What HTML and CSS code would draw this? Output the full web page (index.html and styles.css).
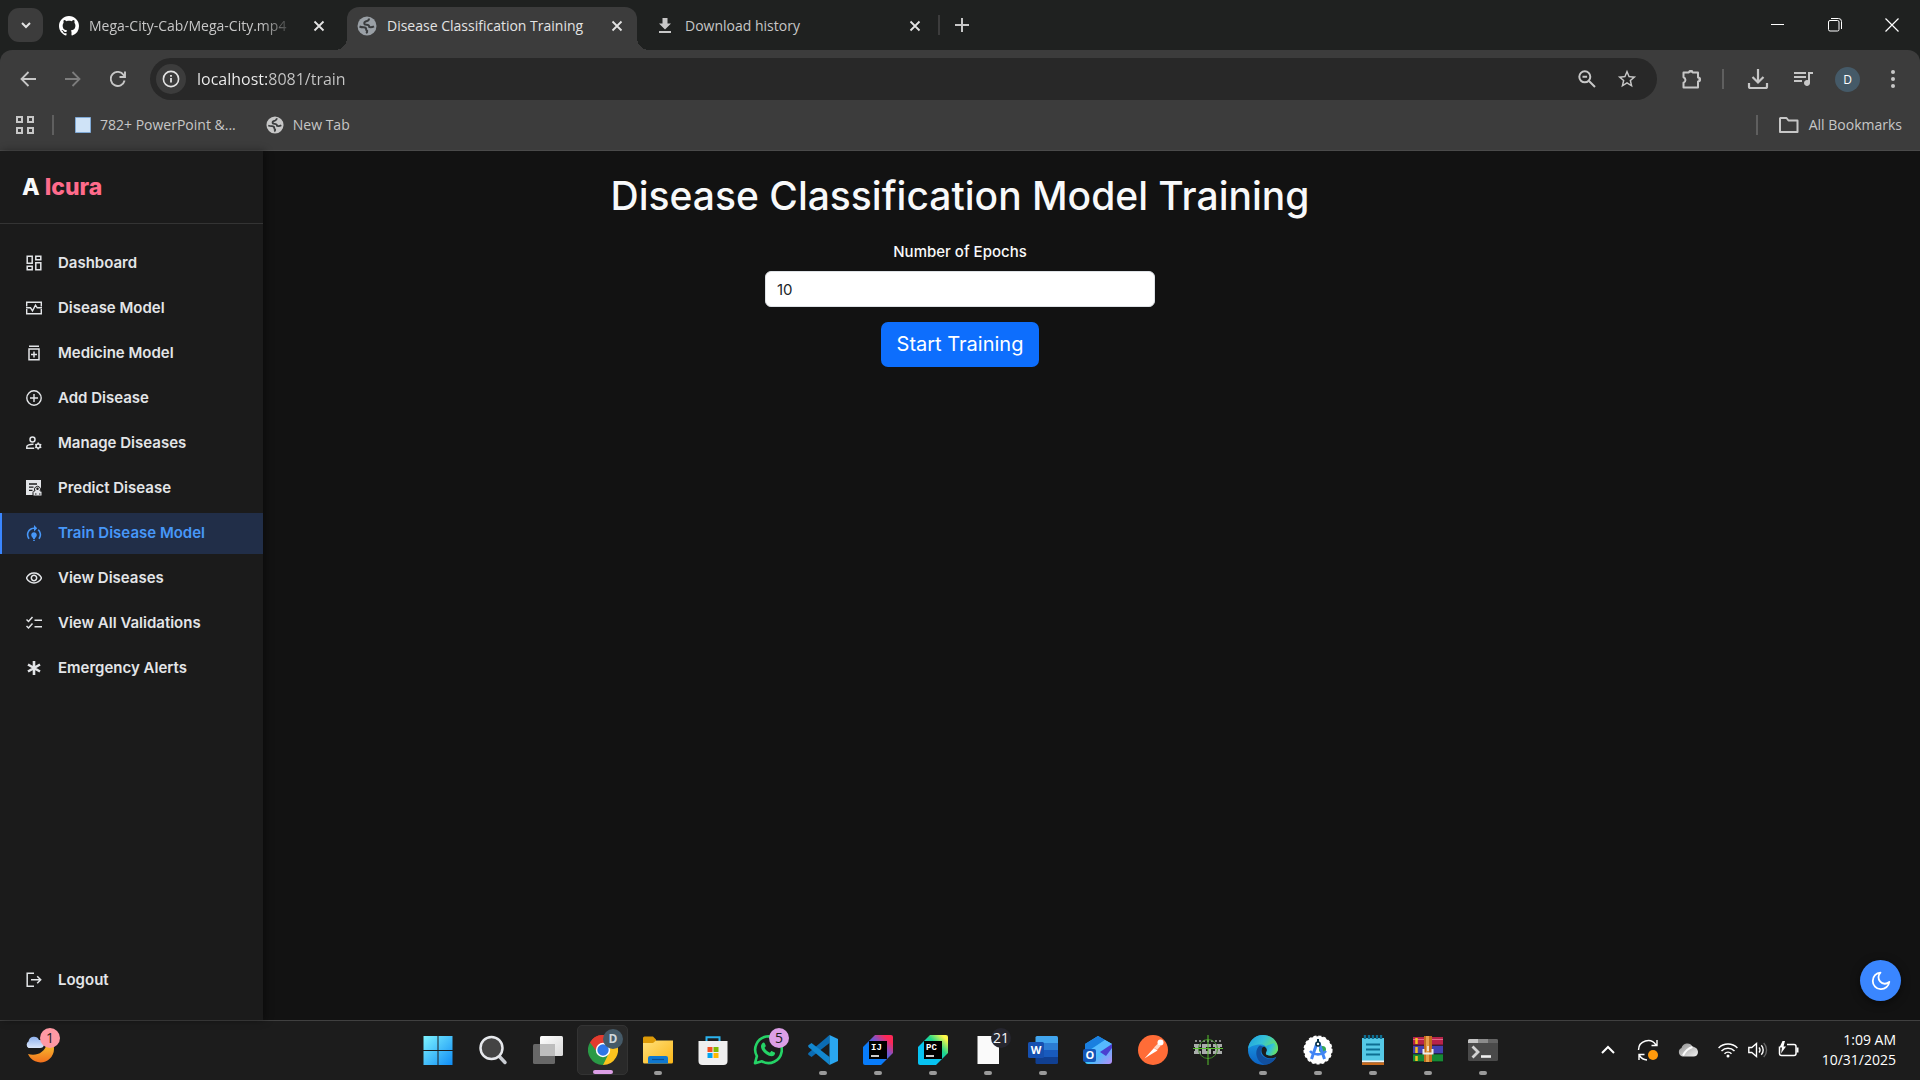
FILE: index.html
```html
<!DOCTYPE html>
<html lang="en">
<head>
<meta charset="utf-8">
<meta name="viewport" content="width=device-width, initial-scale=1">
<title>Disease Classification Training</title>
<link rel="stylesheet" href="styles.css">
</head>
<body>
<svg class="defs" aria-hidden="true">
  <defs>
    <symbol id="i-close" viewBox="0 0 16 16"><path d="M3.500 3.500l9 9M12.500 3.500l-9 9" fill="none" stroke="currentColor" stroke-width="1.800"/></symbol>
    <symbol id="i-globe" viewBox="0 0 20 20"><circle cx="10" cy="10" r="9.500" fill="currentColor"/><path d="M12 2.500c0 1.600-.8 2.300-2 2.600-1.800.4-2.700 1-2.700 2.200 0 1 .8 1.500 2.200 1.500 2.200 0 2.700 1 2.900 2.300 1.600.3 3.300 0 4.600-.8M2.500 10.500c1.300.6 2.500.8 4 .8 1.700 0 2.700.8 2.700 2.200 0 .8.300 1.200 1 1.500.2.900-.2 1.500-1 2.200" fill="none" stroke="#3a3c3e" stroke-width="2"/></symbol>
    <linearGradient id="g-win" x1="0" y1="0" x2="1" y2="1"><stop offset="0" stop-color="#7df3ff"/><stop offset="1" stop-color="#0f8cf5"/></linearGradient>
    <linearGradient id="g-moon" x1="0" y1="0" x2="0" y2="1"><stop offset="0" stop-color="#f7c531"/><stop offset="1" stop-color="#f2701d"/></linearGradient>
    <linearGradient id="g-cloud" x1="0" y1="0" x2="0" y2="1"><stop offset="0" stop-color="#8fb2ee"/><stop offset="1" stop-color="#dbe7fb"/></linearGradient>
    <linearGradient id="g-view" x1="0" y1="0" x2="1" y2="1"><stop offset="0" stop-color="#fff"/><stop offset="1" stop-color="#d8d8d8"/></linearGradient>
    <linearGradient id="g-folder" x1="0" y1="0" x2="1" y2="1"><stop offset="0" stop-color="#ffe07a"/><stop offset="1" stop-color="#fbb617"/></linearGradient>
    <linearGradient id="g-ij" x1="0" y1="1" x2="1" y2="0"><stop offset=".4" stop-color="#087cfa"/><stop offset=".65" stop-color="#8a4fc0"/><stop offset=".85" stop-color="#fe2857"/></linearGradient>
    <linearGradient id="g-pc" x1="0" y1="1" x2="1" y2="0"><stop offset=".4" stop-color="#07c3f2"/><stop offset=".65" stop-color="#21d789"/><stop offset=".9" stop-color="#fcf84a"/></linearGradient>
    <linearGradient id="g-out" x1="0" y1="0" x2="1" y2="1"><stop offset="0" stop-color="#2a8cf0"/><stop offset=".5" stop-color="#35c6fb"/><stop offset="1" stop-color="#b98cf7"/></linearGradient>
    <linearGradient id="g-edge" x1="0" y1="0" x2="1" y2=".5"><stop offset="0" stop-color="#1b9de0"/><stop offset=".5" stop-color="#35c1d8"/><stop offset="1" stop-color="#6be35a"/></linearGradient>
    <linearGradient id="g-edge2" x1="0" y1="0" x2="0" y2="1"><stop offset="0" stop-color="#1ea3e8"/><stop offset="1" stop-color="#0c62c4"/></linearGradient>
    <linearGradient id="g-drive" x1="0" y1="0" x2="1" y2="1"><stop offset="0" stop-color="#8e8e8e"/><stop offset="1" stop-color="#f2f2f2"/></linearGradient>
  </defs>
</svg>

<header class="browser">
  <div class="tabstrip">
    <button class="tab-search" type="button" aria-label="Search tabs"><svg viewBox="0 0 16 16" width="16" height="16"><path d="M4 6l4 4 4-4" fill="none" stroke="currentColor" stroke-width="2"/></svg></button>
    <div class="tab">
      <svg class="tab-icon bright" viewBox="0 0 16 16"><path fill="currentColor" d="M8 0C3.580 0 0 3.580 0 8c0 3.540 2.290 6.530 5.470 7.590.4.070.55-.17.55-.38 0-.19-.01-.82-.01-1.490-2.010.37-2.530-.49-2.690-.94-.09-.23-.48-.94-.82-1.130-.28-.15-.68-.52-.01-.53.63-.01 1.080.58 1.230.82.72 1.210 1.870.87 2.330.66.070-.52.28-.87.51-1.070-1.780-.2-3.640-.89-3.640-3.950 0-.87.31-1.590.82-2.150-.08-.2-.36-1.020.080-2.120 0 0 .67-.21 2.200.82.64-.18 1.320-.27 2-.27s1.360.09 2 .27c1.530-1.040 2.200-.82 2.200-.82.44 1.100.16 1.920.080 2.120.51.56.82 1.270.82 2.150 0 3.070-1.870 3.750-3.650 3.950.29.25.54.73.54 1.480 0 1.070-.01 1.930-.01 2.200 0 .21.15.46.55.38A8.010 8.010 0 0 0 16 8c0-4.420-3.580-8-8-8z"/></svg>
      <span class="tab-title faded">Mega-City-Cab/Mega-City.mp4</span>
      <button class="tab-close" type="button" aria-label="Close tab"><svg width="16" height="16"><use href="#i-close"/></svg></button>
    </div>
    <div class="tab active">
      <svg class="tab-icon dim"><use href="#i-globe"/></svg>
      <span class="tab-title">Disease Classification Training</span>
      <button class="tab-close" type="button" aria-label="Close tab"><svg width="16" height="16"><use href="#i-close"/></svg></button>
    </div>
    <div class="tab">
      <svg class="tab-icon" viewBox="0 0 20 20"><path fill="currentColor" d="M7.500 2h5v5.500h3.500L10 13.500 4 7.500h3.500zM4 15h12v2H4z"/></svg>
      <span class="tab-title">Download history</span>
      <button class="tab-close" type="button" aria-label="Close tab"><svg width="16" height="16"><use href="#i-close"/></svg></button>
    </div>
    <span class="tab-sep"></span>
    <button class="new-tab" type="button" aria-label="New tab"><svg width="14" height="14" viewBox="0 0 14 14"><path d="M7 0v14M0 7h14" stroke="currentColor" stroke-width="2"/></svg></button>
    <div class="window-controls">
      <button type="button" aria-label="Minimize"><svg width="14" height="14" viewBox="0 0 14 14"><path d="M0 6.500h13" stroke="currentColor"/></svg></button>
      <button type="button" aria-label="Restore"><svg width="14" height="14" viewBox="0 0 14 14" fill="none" stroke="currentColor"><rect x=".5" y="2.500" width="10.500" height="10.500" rx="1.500"/><path d="M3 .5h7.500a3 3 0 0 1 3 3V11"/></svg></button>
      <button type="button" aria-label="Close"><svg width="14" height="14" viewBox="0 0 14 14"><path d="M.5.5l13 13M13.500.5l-13 13" stroke="currentColor" stroke-width="1.200"/></svg></button>
    </div>
  </div>

  <div class="toolbar">
    <button class="tool" type="button" aria-label="Back"><svg width="16" height="16" viewBox="0 0 16 16" fill="none" stroke="currentColor" stroke-width="1.800"><path d="M16 8H2M8.500 1L1.500 8l7 7"/></svg></button>
    <button class="tool off" type="button" aria-label="Forward"><svg width="16" height="16" viewBox="0 0 16 16" fill="none" stroke="currentColor" stroke-width="1.800"><path d="M0 8h14M7.500 1l7 7-7 7"/></svg></button>
    <button class="tool" type="button" aria-label="Reload"><svg width="16" height="16" viewBox="0 0 16 16" fill="none" stroke="currentColor" stroke-width="1.900"><path d="M14.600 9.500A7 7 0 1 1 13.600 4L15 5.600M15 .5V6H9.500"/></svg></button>
    <div class="omnibox">
      <button class="site-info" type="button" aria-label="View site information"><svg width="18" height="18" viewBox="0 0 18 18"><circle cx="9" cy="9" r="7.600" fill="none" stroke="currentColor" stroke-width="1.600"/><path d="M9 8v4.500M9 5v1.800" stroke="currentColor" stroke-width="1.800"/></svg></button>
      <input class="url" type="text" aria-label="Address" value="localhost:8081/train">
      <button class="omni-btn" type="button" aria-label="Zoom"><svg width="18" height="18" viewBox="0 0 18 18" fill="none" stroke="currentColor" stroke-width="2"><circle cx="6.800" cy="6.800" r="5.500"/><path d="M11 11l6 6M4.500 6.800h4.600"/></svg></button>
      <button class="omni-btn" type="button" aria-label="Bookmark this tab"><svg width="22" height="22" viewBox="0 0 24 24"><path fill="currentColor" d="M22 9.240l-7.190-.62L12 2 9.190 8.630 2 9.240l5.460 4.730L5.820 21 12 17.270 18.180 21l-1.630-7.030L22 9.240zM12 15.400l-3.760 2.270 1-4.280-3.320-2.880 4.380-.38L12 6.100l1.710 4.040 4.380.38-3.320 2.880 1 4.280L12 15.400z"/></svg></button>
    </div>
    <button class="tool" type="button" aria-label="Extensions"><svg width="22" height="22" viewBox="0 0 22 22"><path d="M2.500 4.500h5.300a2 2 0 0 1 3.900 0h5.300v5a2 2 0 0 1 0 4v6h-14.500v-4.700a3 3 0 0 0 0-5.600z" fill="none" stroke="currentColor" stroke-width="2" stroke-linejoin="round"/><path d="M7.500 4.500a2.400 2.400 0 0 1 4.800 0zM17.500 9.200a2.400 2.400 0 0 1 0 4.800z" fill="currentColor"/></svg></button>
    <span class="sep"></span>
    <button class="tool" type="button" aria-label="Downloads"><svg width="22" height="22" viewBox="0 0 22 22" fill="none" stroke="currentColor" stroke-width="2.200"><path d="M11 1v13M5.500 9l5.500 5.500L16.500 9M2 15v3.500a1.500 1.500 0 0 0 1.500 1.500h15a1.500 1.500 0 0 0 1.500-1.500V15"/></svg></button>
    <button class="tool" type="button" aria-label="Media controls"><svg width="24" height="24" viewBox="0 0 24 24"><path fill="currentColor" d="M15 5H3v2h12V5zm0 4H3v2h12V9zM3 15h8v-2H3v2zM17 5v8.180c-.31-.11-.65-.18-1-.18-1.660 0-3 1.340-3 3s1.340 3 3 3 3-1.340 3-3V7h3V5h-5z"/></svg></button>
    <button class="tool" type="button" aria-label="Profile"><span class="avatar">D</span></button>
    <button class="tool" type="button" aria-label="Menu"><svg width="6" height="20" viewBox="0 0 6 20" fill="currentColor"><circle cx="3" cy="3" r="2"/><circle cx="3" cy="10" r="2"/><circle cx="3" cy="17" r="2"/></svg></button>
  </div>

  <nav class="bookmarks" aria-label="Bookmarks">
    <button class="apps" type="button" aria-label="Tab groups"><svg width="18" height="18" viewBox="0 0 18 18" fill="none" stroke="currentColor" stroke-width="2"><path d="M1 1h5v5H1zM12 1h5v5h-5zM1 12h5v5H1zM12 12h5v5h-5z"/></svg></button>
    <span class="sep"></span>
    <a class="mark" href="#"><svg width="16" height="16" viewBox="0 0 16 16"><path d="M.5.5h15v15H.5z" fill="#cfe3f7" stroke="#7fa9d6"/></svg>782+ PowerPoint &amp;...</a>
    <a class="mark" href="#"><svg width="18" height="18"><use href="#i-globe"/></svg>New Tab</a>
    <span class="sep push"></span>
    <button class="all" type="button"><svg width="22" height="18" viewBox="0 0 22 18"><path d="M2.500 2h6l2 2.500h9v11.500h-17.500V2.500z" fill="none" stroke="currentColor" stroke-width="2" stroke-linejoin="round"/></svg>All Bookmarks</button>
  </nav>
</header>

<div class="app">
  <aside class="sidebar">
    <div class="brand">A <span>Icura</span></div>
    <nav class="menu" aria-label="Main">
      <a href="#"><svg viewBox="0 0 16 16" fill="none" stroke="currentColor" stroke-width="1.500"><path d="M1.200 1.200h5v7h-5zM9.800 1.200h5v3.600h-5zM1.200 11.200h5v3.600h-5zM9.800 7.800h5v7h-5z"/></svg>Dashboard</a>
      <a href="#"><svg viewBox="0 0 16 16" fill="none" stroke="currentColor" stroke-width="1.400"><path d="M.7 6.500V2.200h14.600v4.300M.7 9v4.800h14.600V9M0 7.800h4.500l2 3 3-5.600 1.700 2.600H16"/></svg>Disease Model</a>
      <a href="#"><svg viewBox="0 0 16 16" fill="none" stroke="currentColor" stroke-width="1.500"><path d="M3 1.300h10M3 4h10v10.800H3zM8 6.500v6M5 9.500h6" /></svg>Medicine Model</a>
      <a href="#"><svg viewBox="0 0 16 16" fill="none" stroke="currentColor" stroke-width="1.400"><circle cx="8" cy="8" r="7.200"/><path d="M8 4v8M4 8h8"/></svg>Add Disease</a>
      <a href="#"><svg viewBox="0 0 16 16" fill="none" stroke="currentColor" stroke-width="1.500"><circle cx="6.500" cy="4.500" r="2.500"/><path d="M8.200 13.300H.8v-1.500c0-1.600 3-2.700 6.700-2.500"/><circle cx="12.200" cy="11" r="2"/><path d="M12.200 7.500V9M12.200 13v1.500M9.200 9.300l1.300.7M14 12l1.300.7M9.200 12.700l1.300-.7M14 10l1.300-.7"/></svg>Manage Diseases</a>
      <a href="#"><svg viewBox="0 0 16 16"><path fill="currentColor" d="M0 0h15v15H0z"/><path d="M3 4h8M3 7.200h4.500M3 10.300h3.500" stroke="#1b1b1b" stroke-width="1.300"/><path d="M7 16v-3.500c0-1.300 1-1.500 2-1.500a3 3 0 1 1 5 0c1 0 2 .4 2 1.500V16z" fill="#e3e5e8" stroke="#1b1b1b" stroke-width="1"/><circle cx="11.500" cy="8.700" r="1.200" fill="#1b1b1b"/><path d="M9 14h1.500M13 14h1.500" stroke="#1b1b1b"/></svg>Predict Disease</a>
      <a class="current" href="#" aria-current="page"><svg viewBox="3 1 18 20"><path fill="currentColor" d="M15.500 13.500c0 2-2.500 3.500-2.500 5h-2c0-1.500-2.500-3-2.500-5 0-1.930 1.570-3.500 3.500-3.500s3.500 1.570 3.500 3.500zm-2.500 6h-2V21h2v-1.500zm6-6.500c0 1.680-.59 3.210-1.580 4.420l1.420 1.420C20.180 17.270 21 15.230 21 13c0-2.740-1.230-5.190-3.160-6.840l-1.420 1.420C17.990 8.860 19 10.820 19 13zM16 5l-4-4v3c-4.970 0-9 4.030-9 9 0 2.230.82 4.270 2.160 5.840l1.420-1.420C5.590 16.210 5 14.680 5 13c0-3.860 3.140-7 7-7v3l4-4z"/></svg>Train Disease Model</a>
      <a href="#"><svg viewBox="2 1 20 21"><path fill="currentColor" d="M12 6c3.790 0 7.170 2.130 8.820 5.500C19.170 14.870 15.790 17 12 17s-7.170-2.130-8.820-5.500C4.830 8.130 8.210 6 12 6m0-2C7 4 2.730 7.110 1 11.500 2.730 15.890 7 19 12 19s9.270-3.110 11-7.500C21.270 7.110 17 4 12 4zm0 5c1.380 0 2.500 1.120 2.500 2.500S13.380 14 12 14s-2.500-1.120-2.500-2.500S10.620 9 12 9m0-2c-2.480 0-4.500 2.020-4.500 4.500S9.520 16 12 16s4.500-2.020 4.500-4.500S14.480 7 12 7z"/></svg>View Diseases</a>
      <a href="#"><svg viewBox="0 0 16 16" fill="none" stroke="currentColor" stroke-width="1.500"><path d="M.5 4.500l2 2L6.500 2M.5 11l2 2 4-4.500M8.500 5.200H16M8.500 11.700H16"/></svg>View All Validations</a>
      <a href="#"><svg viewBox="0 0 16 16" fill="none" stroke="currentColor" stroke-width="2.600"><path d="M8 1v14M2 4.500l12 7M14 4.500l-12 7"/></svg>Emergency Alerts</a>
    </nav>
    <nav class="menu bottom" aria-label="Account">
      <a href="#"><svg viewBox="0 0 16 16" fill="none" stroke="currentColor" stroke-width="1.500"><path d="M8 1.300H1.200v13H8M5 7.800h9.500M11.200 4.300l3.500 3.500-3.500 3.500"/></svg>Logout</a>
    </nav>
  </aside>
  <main class="content">
    <h1>Disease Classification Model Training</h1>
    <form class="train">
      <label for="epochs">Number of Epochs</label>
      <input id="epochs" type="number" value="10">
      <button type="button">Start Training</button>
    </form>
  </main>
  <button class="theme" type="button" aria-label="Toggle theme"><svg width="20" height="20" viewBox="0 0 20 20"><path d="M9.500 1.600A8.300 8.300 0 1 0 18.300 11 6 6 0 0 1 9.500 1.600z" fill="none" stroke="currentColor" stroke-width="1.800" stroke-linejoin="round"/></svg></button>
</div>

<footer class="taskbar">
  <button class="weather" type="button" aria-label="Weather">
    <svg width="30" height="30" viewBox="0 0 30 30"><path d="M28 9A13 13 0 0 1 3 19c8 2.500 17-1 19-11z" fill="url(#g-moon)"/><path d="M3.500 13a3.800 3.800 0 0 1 0-6.500A5.500 5.500 0 0 1 14 5c3 0 5 2 5 4.500S17 13 15 13z" fill="url(#g-cloud)"/></svg>
    <span class="badge pink">1</span>
  </button>
  <div class="apps-row">
    <button class="task" type="button" aria-label="Start"><svg viewBox="0 0 30 30"><path fill="url(#g-win)" d="M.5 1h14v14H.5zM15.500 1h14v14h-14zM.5 16h14v14H.5zM15.500 16h14v14h-14z"/></svg></button>
    <button class="task" type="button" aria-label="Search"><svg viewBox="0 0 30 30"><path d="M20 20l7 7.500" stroke="#c9ccd2" stroke-width="3.500" stroke-linecap="round"/><circle cx="13.500" cy="13" r="11" fill="#444" stroke="#e6e8ec" stroke-width="2.500"/></svg></button>
    <button class="task" type="button" aria-label="Task view"><svg viewBox="0 0 30 30"><rect y="9" width="22" height="20" rx="1.500" fill="#676767"/><rect x="7" y="1" width="23" height="20" rx="1.500" fill="url(#g-view)"/><path d="M7 9h15v12H7z" fill="#bdbdbd"/></svg></button>
    <button class="task open focused" type="button" aria-label="Google Chrome"><svg viewBox="0 0 30 30"><path d="M15 15L2 7.500A15 15 0 0 1 28 7.500z" fill="#e33b2e"/><path d="M15 15L28 7.500A15 15 0 0 1 15 30z" fill="#fcc31e"/><path d="M15 15l5.500 4L15 30A15 15 0 0 1 2 7.500z" fill="#2a9a46"/><path d="M15 8.500h13.500L27 15H15z" fill="#fcc31e"/><path d="M15 7.800h13.200A15 15 0 0 0 2 7.500l6.800 9z" fill="#e33b2e"/><circle cx="15" cy="15" r="7.200" fill="#fff"/><circle cx="15" cy="15" r="5.700" fill="#2e76e8"/></svg><span class="badge slate">D</span></button>
    <button class="task open" type="button" aria-label="File Explorer"><svg viewBox="0 0 30 30"><path d="M0 3a1.500 1.500 0 0 1 1.500-1.500H10l3 3V9H0z" fill="#dd9a07"/><path d="M0 8h10l3-2.500h17V27a1.500 1.500 0 0 1-1.500 1.500h-27A1.500 1.500 0 0 1 0 27z" fill="url(#g-folder)"/><path d="M5 28.500V23a2 2 0 0 1 2-2h16a2 2 0 0 1 2 2v5.500z" fill="#0f78d0"/><path d="M9 24.500h12" stroke="#0a4f94" stroke-width="1.200"/></svg></button>
    <button class="task" type="button" aria-label="Microsoft Store"><svg viewBox="0 0 30 30"><path d="M8.500 7V2.200h13V7" fill="none" stroke="#2bb3ee" stroke-width="2"/><path d="M.5 6h29v20a4 4 0 0 1-4 4h-21a4 4 0 0 1-4-4z" fill="#efefef"/><path d="M9.500 12h5v5h-5z" fill="#f25022"/><path d="M15.500 12h5v5h-5z" fill="#7fba00"/><path d="M9.500 18h5v5h-5z" fill="#00a4ef"/><path d="M15.500 18h5v5h-5z" fill="#ffb900"/></svg></button>
    <button class="task" type="button" aria-label="WhatsApp"><svg viewBox="0 0 30 30"><path d="M2 28.200l1.900-7A13.300 13.300 0 1 1 9 26.300z" fill="none" stroke="#25d366" stroke-width="2.600" stroke-linejoin="round"/><path d="M9.300 8.200c.9-.9 2-.8 2.400.1l1 2.300c.2.600-.2 1.100-1.200 2.200 1.300 2.500 2.900 3.900 5.400 5 1.200-1.500 1.500-1.900 2.200-1.600l2.600 1.300c.7.400.4 2-.7 3-3.600 3-12.500-3-13-8.700-.1-1.500.5-2.800 1.300-3.600z" fill="#25d366"/></svg><span class="badge violet">5</span></button>
    <button class="task open" type="button" aria-label="Visual Studio Code"><svg viewBox="0 0 30 30"><path d="M21.500 0v8L3.500 22l-2.800-2a1.500 1.500 0 0 1 0-2.200z" fill="#0b6cb3"/><path d="M21.500 30v-8L3.500 8 .7 10a1.500 1.500 0 0 0 0 2.200z" fill="#1287cf"/><path d="M21.500 0L30 4v22l-8.500 4z" fill="#2aa7f1"/></svg></button>
    <button class="task open" type="button" aria-label="IntelliJ IDEA"><svg viewBox="0 0 30 30"><path d="M0 12L12 0h16a2 2 0 0 1 2 2v16L18 30H2a2 2 0 0 1-2-2z" fill="url(#g-ij)"/><path d="M6 6h18v18H6z"/><text x="8" y="15" class="ide">IJ</text><path d="M8 21h8" stroke="#fff" stroke-width="1.600"/></svg></button>
    <button class="task open" type="button" aria-label="PyCharm"><svg viewBox="0 0 30 30"><path d="M0 12L12 0h16a2 2 0 0 1 2 2v16L18 30H2a2 2 0 0 1-2-2z" fill="url(#g-pc)"/><path d="M6 6h18v18H6z"/><text x="8" y="15" class="ide">PC</text><path d="M8 21h8" stroke="#fff" stroke-width="1.600"/></svg></button>
    <button class="task open" type="button" aria-label="Documents"><svg viewBox="0 0 30 30"><path d="M4.500 1h16L26 7v22H4.500z" fill="#fafafa"/></svg><span class="badge ink">21</span></button>
    <button class="task open" type="button" aria-label="Word"><svg viewBox="0 0 30 30"><path d="M7.500 2.500a1.500 1.500 0 0 1 1.500-1.500h19.500A1.500 1.500 0 0 1 30 2.500V8H7.500z" fill="#41a5ee"/><path d="M7.500 8H30v7H7.500z" fill="#2b7cd3"/><path d="M7.500 15H30v7H7.500z" fill="#185abd"/><path d="M7.500 22H30v5.500a1.500 1.500 0 0 1-1.500 1.500H9a1.500 1.500 0 0 1-1.500-1.500z" fill="#103f91"/><rect x="0" y="7" width="16" height="16" rx="1.500" fill="#1650b0"/><text x="8" y="19" class="letter">W</text></svg></button>
    <button class="task" type="button" aria-label="Outlook"><svg viewBox="0 0 30 30"><path d="M15 1l14 8v17a3 3 0 0 1-3 3H5a3 3 0 0 1-3-3V9z" fill="url(#g-out)"/><path d="M15 1l7 4L5 16l-3-2V9z" fill="#1a7fe0"/><path d="M22 5l7 4L13 20l-7-4z" fill="#56b9ff"/><path d="M29 9v4l-6 8-6-4z" fill="#4a3fd0"/><rect y="14" width="13" height="13" rx="2" fill="#1457b8"/><text x="7" y="24" class="letter">O</text></svg></button>
    <button class="task" type="button" aria-label="Postman"><svg viewBox="0 0 30 30"><circle cx="15" cy="15" r="15" fill="#ff6c37"/><path d="M6.500 23.500L16 13l3.500 2.500L12 20z" fill="#fff"/><path d="M16 12.500l4-4 2.500 2.500-3.500 4z" fill="#ffd9c9"/><circle cx="22.500" cy="7.500" r="3" fill="#fff"/></svg></button>
    <button class="task" type="button" aria-label="Project IGI"><svg viewBox="0 0 30 30"><path d="M2 6h26" stroke="#8a8a8a" stroke-width="2" stroke-dasharray="2 2"/><path d="M1 9h7v3H6v4h2v3H1v-3h1v-4H1zM9 9h9v3h-5v4h2v-2h3v5H9zM20 9h9v3h-2v4h2v3h-9v-3h2v-4h-2z" fill="#a9adab"/><circle cx="15" cy="14" r="9.500" fill="none" stroke="#3f8a28"/><path d="M15 0v30M0 13.500h30" stroke="#59c02e" stroke-width="1"/></svg></button>
    <button class="task open" type="button" aria-label="Microsoft Edge"><svg viewBox="0 0 30 30"><circle cx="15" cy="15" r="15" fill="url(#g-edge2)"/><path d="M0 14C1 6 7 0 15 0c9 0 15 6.500 15 13 0 5-4 7.500-8 7.500-3.500 0-4.500-1.300-4-2.500 2.500-3.500.5-8.500-5.500-8.500C6 9.500 1 12 0 14z" fill="url(#g-edge)"/><path d="M12 10.500C6 14 7 27 17 29.800c5-.6 9-3.300 11-7.300-3.500 2-8 2-11 .3-5-2.800-6-8-1-10.800z" fill="#114f9e"/><path d="M16 11.500c-4 2-3 8 1 10.300 4 2.400 9 1.600 11.800 0L30 20v-5c-1 4-5 5.500-8 5.500-3.500 0-4.500-1.300-4-2.500 1.500-2.500 1-5-2-6.500z" fill="#1c1c1c"/><path d="M18 11c2 2.500 1 5.500 0 7-.5 1.200.5 2.500 4 2.500 4 0 8-2.500 8-7.500l-4-5z" fill="url(#g-edge)"/></svg></button>
    <button class="task open" type="button" aria-label="Android Studio"><svg viewBox="0 0 30 30"><circle cx="15" cy="15" r="13.800" fill="#fff" stroke="#fff" stroke-width="1.500" stroke-dasharray="3 2"/><circle cx="19.500" cy="14.500" r="3.500" fill="#34a853"/><path d="M14 8L8.500 24M16 8l5.500 16" stroke="#4285f4" stroke-width="3"/><path d="M7 16c4 4.500 12 4.500 16 0" stroke="#4285f4" stroke-width="2.600" fill="none"/><path d="M15 4v3" stroke="#073042" stroke-width="2"/><circle cx="15" cy="9" r="2" fill="#fff" stroke="#073042" stroke-width="1.500"/></svg></button>
    <button class="task open" type="button" aria-label="Notepad"><svg viewBox="0 0 30 30"><path d="M4 3h22v24H4z" fill="#55c9e6"/><path d="M4 25.500h22v2H4z" fill="#f5f5f5"/><path d="M4 27.500h22V30H4z" fill="#c96a1b"/><path d="M7 0v4M11 0v4M15 0v4M19 0v4M23 0v4" stroke="#0e6f93" stroke-width="2.400"/><path d="M8 9.500h14M8 14.500h14M8 19.500h14" stroke="#0d6e92" stroke-width="2"/></svg></button>
    <button class="task open" type="button" aria-label="WinRAR"><svg viewBox="0 0 30 30"><path d="M0 2h30v9H0z" fill="#b8234a"/><path d="M0 10.500h30v9H0z" fill="#4340b0"/><path d="M0 19h30v8H0z" fill="#168a35"/><path d="M0 9.500h30v1.500H0zM0 18h30v1.500H0zM0 26h30v1.500H0z" fill="#101010" opacity=".6"/><path d="M0 4.500h30" stroke="#e2688a" stroke-width="1"/><path d="M3.500 3v6M3.500 12v6M3.500 21v5" stroke="#f5c21f" stroke-width="2.500"/><path d="M11 1h8v26h-8z" fill="#c26d1e"/><path d="M13 1h3v26h-3z" fill="#e5a04a"/><path d="M10.500 14v4.500h9V14" fill="none" stroke="#ececec" stroke-width="2"/><path d="M15 11v5" stroke="#eee" stroke-width="1.500"/></svg></button>
    <button class="task open" type="button" aria-label="Terminal"><svg viewBox="0 0 30 30"><rect y="4" width="30" height="22" rx="1.500" fill="#4a4a4a"/><path d="M0 8V5.500A1.500 1.500 0 0 1 1.500 4H10v4z" fill="#c4c4c4"/><path d="M10 4h10v4H10z" fill="#8b8b8b"/><path d="M20 4h8.500A1.500 1.500 0 0 1 30 5.500V8H20z" fill="#636363"/><path d="M4.500 11.500L10 17l-5.500 5.500" fill="none" stroke="#d2d2d2" stroke-width="2.800"/><path d="M13 21.500h10" stroke="#f0f0f0" stroke-width="2.600"/></svg></button>
  </div>
  <div class="tray">
    <button type="button" aria-label="Show hidden icons"><svg width="16" height="16" viewBox="0 0 16 16"><path d="M2 11l6-6 6 6" fill="none" stroke="currentColor" stroke-width="2"/></svg></button>
    <button type="button" aria-label="Windows Update"><svg width="22" height="22" viewBox="0 0 22 22"><path d="M1.500 11A9.500 9.500 0 0 1 19 6M20 1v5.500h-5.500M2 21v-5.500h5.500M2.500 16.500A10 10 0 0 0 10 21" fill="none" stroke="currentColor" stroke-width="1.400"/><circle cx="16" cy="16" r="5" fill="#ff9a0c"/></svg></button>
    <button type="button" aria-label="OneDrive"><svg width="20" height="20" viewBox="0 0 20 20"><path d="M4.500 16.500a4.500 4.500 0 0 1-1-8.500 6 6 0 0 1 11-1.500c3 .5 5.500 2.500 5.500 5.500s-2 4.500-4.500 4.500z" fill="url(#g-drive)"/><path d="M5 15.500c2-4 4.500-7 9.500-8.500" stroke="#fafafa" stroke-width="2" fill="none"/></svg></button>
    <button class="system" type="button" aria-label="Network, sound and battery">
      <svg width="20" height="16" viewBox="0 0 20 16" fill="none" stroke="currentColor" stroke-width="1.500"><path d="M.6 6a13.300 13.300 0 0 1 18.800 0M3.500 9a9.200 9.200 0 0 1 13 0M6.500 11.700a5 5 0 0 1 7 0"/><circle cx="10" cy="14" r="1.500" fill="currentColor" stroke="none"/></svg>
      <svg width="20" height="16" viewBox="0 0 20 16" fill="none" stroke="currentColor" stroke-width="1.400"><path d="M.8 5.500h3L8.500 1.500v13L3.800 10.500h-3zM11 5.500a4 4 0 0 1 0 5M13.300 3.200a7 7 0 0 1 0 9.600"/><path d="M15.700 1a10 10 0 0 1 0 14" stroke="#666"/></svg>
      <svg width="21" height="18" viewBox="0 0 21 18"><path d="M9 3.500h7a2 2 0 0 1 2 2v7a2 2 0 0 1-2 2H3.500a2 2 0 0 1-2-2V5.500" fill="none" stroke="currentColor" stroke-width="1.500"/><path d="M18.500 6.500h2v5h-2zM4.500 0L1.500 6.500h2.500L3 12.500l5-7H5.500L7 0z" fill="currentColor"/></svg>
    </button>
    <time class="clock" datetime="2025-10-31T01:09"><span>1:09 AM</span><span>10/31/2025</span></time>
  </div>
</footer>
</body>
</html>
```
FILE: styles.css
```css
:root {
  --chrome: #3c3c3c;
  --chrome-dark: #1f2120;
  --chrome-text: #c7c7c7;
  --ui: "Open Sans", "Noto Sans", sans-serif;
  --app: Inter, "Noto Sans", sans-serif;
}

* { box-sizing: border-box; }

body {
  margin: 0;
  min-height: 100vh;
  display: flex;
  flex-direction: column;
  background: #121212;
  color: #f8f9fa;
  font-family: var(--app);
}

button {
  display: flex;
  align-items: center;
  justify-content: center;
  padding: 0;
  border: 0;
  background: none;
  color: inherit;
  font: inherit;
}

a { color: inherit; text-decoration: none; }
svg { flex: none; display: block; }
.defs { position: absolute; width: 0; height: 0; }

/* Browser window */
.browser {
  background: var(--chrome-dark);
  color: var(--chrome-text);
  font-family: var(--ui);
  font-size: 14px;
  line-height: 20px;
}

.tabstrip { display: flex; height: 50px; padding-left: 8px; }

.tab-search {
  width: 35px;
  height: 34px;
  margin: 8px 6px 0 0;
  border-radius: 11px;
  background: var(--chrome);
  color: #e3e3e3;
}

.tab {
  position: relative;
  display: flex;
  align-items: center;
  flex: 0 1 290px;
  gap: 10px;
  margin: 7px 8px 0 0;
  padding: 0 10px 6px;
}

.tab.active {
  border-radius: 12px 12px 0 0;
  background: var(--chrome);
  color: #e3e3e3;
}

.tab.active::before,
.tab.active::after {
  content: "";
  position: absolute;
  bottom: 0;
  width: 12px;
  height: 12px;
}
.tab.active::before { right: 100%; background: radial-gradient(circle at 0 0, transparent 12px, var(--chrome) 12px); }
.tab.active::after { left: 100%; background: radial-gradient(circle at 100% 0, transparent 12px, var(--chrome) 12px); }

.tab-icon { width: 20px; height: 20px; }
.tab-icon.bright { color: #fff; }
.tab-icon.dim { color: #9aa0a6; }

.tab-title { flex: 1; overflow: hidden; white-space: nowrap; }
.tab-title.faded { mask-image: linear-gradient(to right, #000 82%, transparent 98%); }
.tab-close { width: 20px; height: 20px; color: #e3e3e3; }

.tab-sep { width: 2px; height: 20px; margin: 15px 7px 0 -5px; background: #3c3c3c; }
.new-tab { width: 30px; }

.window-controls { display: flex; margin-left: auto; color: #fff; }
.window-controls button { width: 57px; }

.toolbar {
  display: flex;
  align-items: center;
  height: 58px;
  padding: 0 5px 0 5px;
  border-radius: 12px 12px 0 0;
  background: var(--chrome);
}

.tool { flex: none; width: 45px; height: 42px; }
.tool.off { color: #7d7d7d; }

.omnibox {
  display: flex;
  align-items: center;
  flex: 1;
  height: 42px;
  margin: 0 12px 0 10px;
  padding: 0 10px 0 6px;
  border-radius: 21px;
  background: #282828;
}

.site-info { width: 30px; height: 30px; border-radius: 15px; background: var(--chrome); color: #e3e3e3; }

.url {
  flex: 1;
  min-width: 0;
  padding: 0;
  margin-left: 11px;
  border: 0;
  outline: 0;
  background: linear-gradient(to right, #f1f1f1 70px, #c7c7c7 70px) text;
  color: transparent;
  font: 16px/24px var(--ui);
}

.omni-btn { width: 40px; height: 40px; }

.sep { flex: none; width: 2px; height: 20px; background: #5f5f5f; }
.toolbar .sep { margin: 0 11px 0 8px; }

.avatar {
  width: 25px;
  border-radius: 50%;
  background: #455a68;
  color: #fff;
  font-size: 12px;
  line-height: 25px;
  text-align: center;
}

.bookmarks {
  display: flex;
  align-items: center;
  height: 43px;
  padding: 0 18px 8px 16px;
  border-bottom: 1px solid #4a4a4a;
  background: var(--chrome);
}
.bookmarks .sep { margin: 0 21px 0 18px; }
.bookmarks .push { margin-left: auto; margin-right: 20px; }
.mark { display: flex; align-items: center; gap: 9px; margin-right: 30px; }
.all { gap: 9px; }

/* Application */
.app {
  position: relative;
  flex: 1;
  display: grid;
  grid-template-columns: 263px 1fr 263px;
}

.sidebar {
  display: flex;
  flex-direction: column;
  background: #1b1b1b;
  box-shadow: 2px 0 8px #0006;
}

.brand {
  padding: 20px 22px 20px;
  border-bottom: 1px solid #343434;
  font-size: 23px;
  font-weight: 800;
  line-height: 32px;
}
.brand span { color: #ff6b8b; }

.menu {
  display: flex;
  flex-direction: column;
  gap: 4px;
  padding-top: 19px;
}
.menu.bottom { margin-top: auto; padding-bottom: 19px; }

.menu a {
  display: flex;
  align-items: center;
  gap: 16px;
  height: 41px;
  padding: 0 0 2px 24px;
  border-left: 2px solid transparent;
  color: #e3e5e8;
  font-size: 15px;
  font-weight: 600;
}
.menu svg { width: 16px; height: 16px; }
.menu .current { border-color: #3a86ff; background: #212e48; color: #4797f8; }

.content { text-align: center; padding-top: 21px; }

h1 { margin: 0 0 21px; font-size: 39px; font-weight: 500; line-height: 47px; }

.train { display: flex; flex-direction: column; align-items: center; }
.train label { margin-bottom: 7px; font-size: 15px; font-weight: 500; line-height: 24px; }

.train input {
  width: 390px;
  max-width: 100%;
  height: 36px;
  padding: 0 11px;
  border: 1px solid #dee2e6;
  border-radius: 6px;
  background: #fff;
  color: #212529;
  font: 15px var(--app);
}

.train button {
  height: 45px;
  margin-top: 15px;
  padding: 0 16px 2px;
  border-radius: 7px;
  background: #0d6efd;
  color: #fff;
  font-size: 20px;
}

.theme {
  position: absolute;
  right: 19px;
  bottom: 19px;
  width: 41px;
  height: 41px;
  border-radius: 50%;
  background: #3a86ff;
  color: #fff;
  box-shadow: 0 2px 8px #0008;
}

/* Taskbar */
.taskbar {
  display: grid;
  grid-template-columns: 1fr auto 1fr;
  align-items: center;
  height: 60px;
  padding-bottom: 1px;
  border-top: 1px solid #404040;
  background: #1c1c1c;
  color: #fff;
  font-family: var(--ui);
}

.weather { position: relative; width: 30px; margin-left: 25px; }

.badge {
  position: absolute;
  top: 3px;
  right: 4px;
  width: 20px;
  border-radius: 10px;
  font-family: var(--ui);
  font-size: 14px;
  line-height: 20px;
  text-align: center;
}
.badge.pink { top: -7px; right: -5px; background: #ff99a4; color: #1c1c1c; }
.badge.slate { background: #455a68; color: #cfd8dc; font-size: 12px; font-weight: 700; }
.badge.violet { background: #dc9fe6; color: #1c1c1c; }
.badge.ink { right: 2px; background: #26262f; color: #f5f5f5; }

.apps-row { display: flex; }

.task {
  position: relative;
  width: 51px;
  height: 50px;
  margin: 0 2px;
  border-radius: 5px;
}
.task svg { width: 30px; height: 30px; }

.task.open::after {
  content: "";
  position: absolute;
  bottom: 0;
  width: 8px;
  height: 4px;
  border-radius: 2px;
  background: #9a9a9a;
}
.task.focused { border: 1px solid #333; background: #292929; }
.task.focused::after { width: 20px; background: #dc9fe6; }

.ide { fill: #fff; font: 700 9px "Liberation Mono", monospace; }
.letter { fill: #fff; font: 700 11px var(--ui); text-anchor: middle; }

.tray { display: flex; align-items: center; justify-content: flex-end; padding-right: 24px; }
.tray > button { width: 40px; height: 40px; }
.tray .system { gap: 10px; width: 100px; }
.clock { display: flex; flex-direction: column; width: 88px; font-size: 14px; line-height: 20px; text-align: right; }
```
